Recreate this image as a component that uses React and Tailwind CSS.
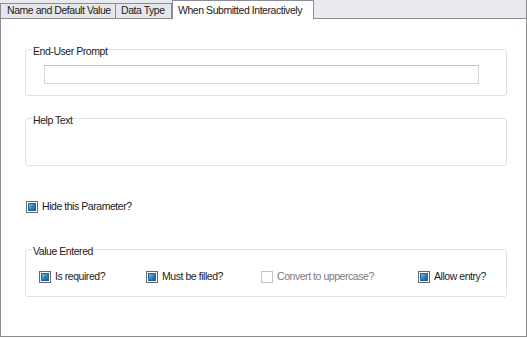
import React from "react";

function Check({ checked, disabled }) {
    if (!checked) {
        return (
            <span className={"w-[12px] h-[12px] shrink-0 border bg-white " + (disabled ? "border-[#c4c4c4]" : "border-[#8f8f8f]")} />
        );
    }
    return (
        <span className="w-[12px] h-[12px] shrink-0 border border-[#5d6a78] bg-white p-[1px] flex">
            <span className="flex-1 bg-gradient-to-br from-[#7fc1e8] via-[#2f86c0] to-[#1c5f95] border border-[#2a5f86]" />
        </span>
    );
}

function Group({ title, height, children }) {
    return (
        <div className={"relative ml-[24px] mr-[19px] border border-[#dde2e9] rounded-[3px] " + height}>
            <span className="absolute -top-[5px] left-[6px] bg-white px-[1px] leading-[12px] text-[#1b1b1b] whitespace-nowrap">
                {title}
            </span>
            {children}
        </div>
    );
}

export default function App() {
    return (
        <div className="w-[527px] h-[338px] bg-white text-[10.5px] tracking-[-0.45px] text-[#1b1b1b] font-['Liberation_Sans',Arial,sans-serif]">
            <div className="flex items-end h-[19px] bg-[#e9eaee] whitespace-nowrap">
                <div className="flex items-center h-[16px] w-[116px] pl-[6px] border border-[#8c8c94] bg-[#e6e7ec]">
                    Name and Default Value
                </div>
                <div className="flex items-center h-[16px] w-[56px] pl-[5px] border border-l-0 border-[#8c8c94] bg-[#e6e7ec]">
                    Data Type
                </div>
                <div className="flex items-start pt-[2px] h-[19px] w-[142px] pl-[5px] border border-b-0 border-[#8c8c94] bg-white">
                    When Submitted Interactively
                </div>
                <div className="flex-1 h-full border-b border-r border-[#8c8c94]" />
            </div>

            <div className="h-[318px] border-x border-b border-[#8c8c94] pt-[30px]">
                <Group title="End-User Prompt" height="h-[47px]">
                    <div className="ml-[18px] mt-[15px] w-[435px] h-[19px] border border-[#d4d6da] border-t-[#c2c4c8] bg-white" />
                </Group>

                <div className="h-[22px]" />
                <Group title="Help Text" height="h-[48px]" />

                <div className="flex items-center gap-[4px] ml-[25px] mt-[35px] h-[12px]">
                    <Check checked />
                    <span>Hide this Parameter?</span>
                </div>

                <div className="h-[36px]" />
                <Group title="Value Entered" height="h-[48px]">
                    <div className="flex items-center h-[12px] mt-[21px] ml-[13px]">
                        <div className="flex items-center gap-[4px] w-[107px]">
                            <Check checked />
                            <span>Is required?</span>
                        </div>
                        <div className="flex items-center gap-[4px] w-[115px]">
                            <Check checked />
                            <span>Must be filled?</span>
                        </div>
                        <div className="flex items-center gap-[4px] w-[157px] text-[#7b7b7b]">
                            <Check disabled />
                            <span>Convert to uppercase?</span>
                        </div>
                        <div className="flex items-center gap-[4px]">
                            <Check checked />
                            <span>Allow entry?</span>
                        </div>
                    </div>
                </Group>
            </div>
        </div>
    );
}
